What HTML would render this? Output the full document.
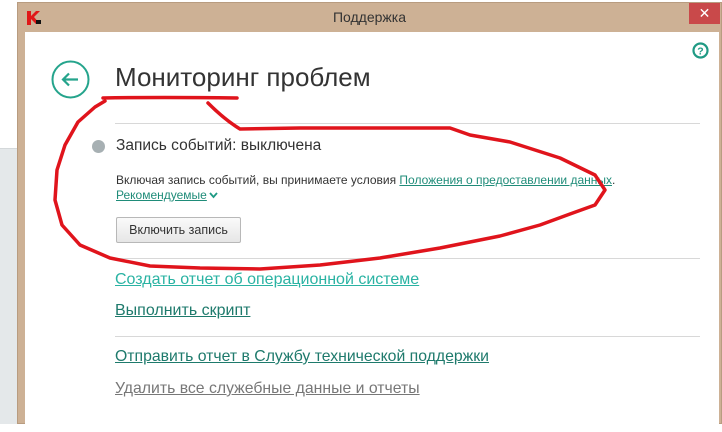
<!DOCTYPE html>
<html><head><meta charset="utf-8"><style>
*{margin:0;padding:0;box-sizing:border-box}
body{width:722px;height:424px;overflow:hidden;position:relative;background:#fff;font-family:"Liberation Sans","DejaVu Sans",sans-serif}
.bg{position:absolute;left:0;top:148px;width:17px;height:276px;background:#e4e8ea;border-top:1px solid #d4d8da}
.win{position:absolute;left:17px;top:2px;width:705px;height:422px;background:#cdb195;border:1px solid #b89c80}
.title{position:absolute;left:0;right:0;top:6px;text-align:center;font-size:14px;color:#333}
.close{position:absolute;left:671px;top:0;width:31px;height:21px;background:#c9494a;color:#fff;text-align:center;font-size:14px;line-height:21px}
.content{position:absolute;left:8px;top:29px;width:694px;height:400px;background:#fff}
.a{position:absolute;white-space:nowrap}
.ln{position:absolute;height:1px;background:#d8d8d8;left:115px;width:585px}
</style></head><body>
<div class="bg"></div>
<div class="win">
 <svg style="position:absolute;left:9px;top:8px" width="15" height="14" viewBox="0 0 15 14"><path d="M0 0h4v5l5-5h4l-6 6 6 7H9L4 8v6H0z" fill="#e01818"/><path d="M9 9h5v4H9z" fill="#111"/></svg>
 <div class="title">Поддержка</div>
 <div class="close">✕</div>
</div>
<div class="content" style="left:25px;top:32px"></div>
<svg style="position:absolute;left:51px;top:60px" width="39" height="39"><circle cx="19.5" cy="19.5" r="18" fill="none" stroke="#25a48c" stroke-width="2"/><path d="M12 19.5h15M18 13.5l-6 6 6 6" fill="none" stroke="#25a48c" stroke-width="2.2"/></svg>
<svg style="position:absolute;left:692px;top:42px" width="17" height="17"><circle cx="8.5" cy="8.5" r="7" fill="none" stroke="#1f9a84" stroke-width="2.2"/><text x="8.5" y="12.5" font-size="10.5" font-weight="bold" fill="#1f9a84" text-anchor="middle" font-family="Liberation Sans">?</text></svg>
<div class="a" style="left:115px;top:62px;font-size:26px;color:#333">Мониторинг проблем</div>
<div class="ln" style="top:123px"></div>
<div class="ln" style="top:258px"></div>
<div class="ln" style="top:336px"></div>
<div class="a" style="left:92px;top:140px;width:13px;height:13px;border-radius:50%;background:#a7b0b3"></div>
<div class="a" style="left:116px;top:137px;font-size:15.5px;color:#333">Запись событий: выключена</div>
<div class="a" style="left:116px;top:173px;font-size:12px;color:#333">Включая запись событий, вы принимаете условия <span style="color:#1f8c79;text-decoration:underline">Положения о предоставлении данных</span>.</div>
<div class="a" style="left:116px;top:188px;font-size:12px;color:#1f8c79"><span style="text-decoration:underline">Рекомендуемые</span><svg width="9" height="7" style="margin-left:2px"><path d="M1 1l3.5 4L8 1" fill="none" stroke="#1f9a84" stroke-width="1.8"/></svg></div>
<div class="a" style="left:116px;top:217px;width:125px;height:26px;border:1px solid #b8b8b8;border-radius:2px;background:linear-gradient(#fafafa,#e6e6e6);font-size:12.5px;color:#333;text-align:center;line-height:24px">Включить запись</div>
<div class="a" style="left:115px;top:271px;font-size:16px;color:#2ab3a3;text-decoration:underline">Создать отчет об операционной системе</div>
<div class="a" style="left:115px;top:302px;font-size:16px;color:#1e7a6c;text-decoration:underline">Выполнить скрипт</div>
<div class="a" style="left:115px;top:348px;font-size:15.8px;color:#1e7a6c;text-decoration:underline">Отправить отчет в Службу технической поддержки</div>
<div class="a" style="left:115px;top:380px;font-size:15.8px;color:#777;text-decoration:underline">Удалить все служебные данные и отчеты</div>
<svg style="position:absolute;left:0;top:0" width="722" height="424" viewBox="0 0 722 424"><g fill="none" stroke="#e0141c" stroke-width="3.5" stroke-linejoin="round" stroke-linecap="round">
<path d="M103 98 Q160 97 237 98"/>
<path d="M208 103 Q225 120 240 129 L300 128 L450 128 L470 135 L510 142 L560 158 L595 175 L605 190 L595 205 L570 214 L540 225 L500 236 L440 248 L380 258 L320 265 L260 269 L200 268 L150 266 L110 258 L80 245 L62 225 L55 200 L57 170 L65 145 L78 122 L95 107 L105 101"/>
</g></svg>
</body></html>
